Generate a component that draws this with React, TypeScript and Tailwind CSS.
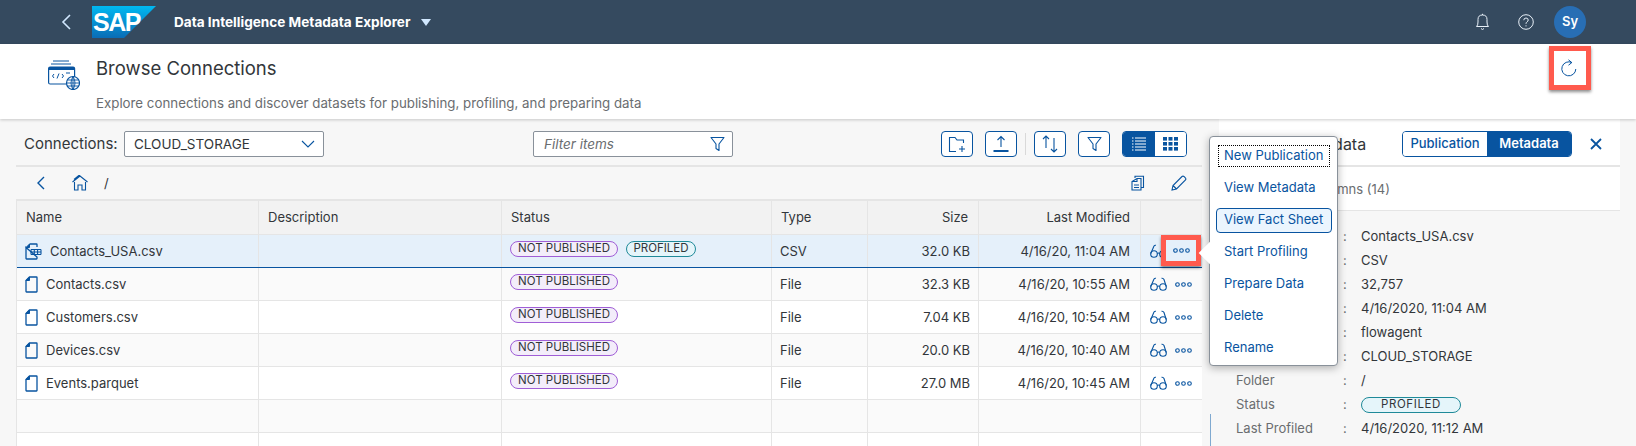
import React from "react";

const S = { stroke: "#0854a0", fill: "none", strokeWidth: 1.1 };

function FileIcon() {
  return (
    <svg width="13" height="17" viewBox="0 0 13 17" className="shrink-0">
      <path d="M4.5 1H11.5Q12 1 12 1.5V15.5Q12 16 11.5 16H1.5Q1 16 1 15.5V4.5Z" {...S} strokeWidth={1.3} />
      <path d="M1 4.5L4.5 1V4.5Z" fill="#0854a0" stroke="#0854a0" />
    </svg>
  );
}
function TableFileIcon() {
  return (
    <svg width="17" height="17" viewBox="0 0 17 17" className="shrink-0">
      <path d="M4.5 1H11.5Q12 1 12 1.5V4M12 14V15.5Q12 16 11.5 16H1.5Q1 16 1 15.5V4.5Z" {...S} strokeWidth={1.3} />
      <path d="M1 4.5L4.5 1V4.5Z" fill="#0854a0" stroke="#0854a0" />
      <path d="M6 6.5H16M6 9H16M6 11.5H16M6 6.5V11.5M9.3 6.5V11.5M12.6 6.5V11.5M16 6.5V11.5" {...S} />
    </svg>
  );
}
function Glasses() {
  return (
    <svg width="17" height="15" viewBox="0 0 17 15" className="shrink-0">
      <circle cx="4" cy="10" r="3.3" {...S} />
      <circle cx="13" cy="10" r="3.3" {...S} />
      <path d="M7.3 9.5Q8.5 8.5 9.7 9.5M0.8 9.5L4 2Q4.7 1 6 1.3M16.2 9.5L14 2.5Q13.3 1 11.5 1.3" {...S} />
    </svg>
  );
}
function Dots() {
  return (
    <svg width="17" height="5" viewBox="0 0 17 5" className="shrink-0">
      <circle cx="2.5" cy="2.5" r="1.8" {...S} />
      <circle cx="8.5" cy="2.5" r="1.8" {...S} />
      <circle cx="14.5" cy="2.5" r="1.8" {...S} />
    </svg>
  );
}
function FunnelIcon() {
  return (
    <svg width="15" height="16" viewBox="0 0 15 16">
      <path d="M1 1.5H14L9 8V14.5L6 12.5V8Z" {...S} strokeLinejoin="round" />
    </svg>
  );
}
function ToolBtn({ children }: { children: React.ReactNode }) {
  return (
    <div className="w-8 h-[26px] flex items-center justify-center rounded border border-[#0854a0] bg-white">
      {children}
    </div>
  );
}
function NotPublished() {
  return (
    <span className="h-4 w-[108px] flex items-center justify-center rounded-full border border-[#a05ed6] bg-[#f3edfa] text-[11.5px] text-[#32363a]">
      NOT PUBLISHED
    </span>
  );
}
function Profiled() {
  return (
    <span className="h-4 w-[70px] flex items-center justify-center rounded-full border border-[#1f8a99] bg-[#e5f5fa] text-[11.5px] text-[#32363a]">
      PROFILED
    </span>
  );
}

const rows = [
  { name: "Contacts.csv", size: "32.3 KB", time: "4/16/20, 10:55 AM", bg: "bg-[#fafafa]" },
  { name: "Customers.csv", size: "7.04 KB", time: "4/16/20, 10:54 AM", bg: "bg-white" },
  { name: "Devices.csv", size: "20.0 KB", time: "4/16/20, 10:40 AM", bg: "bg-[#fafafa]" },
  { name: "Events.parquet", size: "27.0 MB", time: "4/16/20, 10:45 AM", bg: "bg-white" },
];

function Row({ bg, border, name, status, type, size, time, dotsBox }: { bg: string; border?: string; name?: React.ReactNode; status?: React.ReactNode; type?: string; size?: string; time?: string; dotsBox?: boolean }) {
  return (
    <div className={`flex h-[33px] border-b text-[13px] text-[#32363a] ${bg} ${border ?? "border-[#e5e5e5]"}`}>
      <div className="w-[242px] flex items-center gap-2 pl-2 pt-px border-r border-[#e5e5e5]">{name}</div>
      <div className="w-[243px] border-r border-[#e5e5e5]" />
      <div className="w-[270px] flex gap-2 pt-[6px] pl-2 border-r border-[#e5e5e5]">{status}</div>
      <div className="w-[96px] flex items-center pl-2 pt-px border-r border-[#e5e5e5]">{type}</div>
      <div className="w-[111px] flex items-center justify-end pr-2 pt-px border-r border-[#e5e5e5]">{size}</div>
      <div className="w-[162px] flex items-center justify-end pr-[10px] pt-px border-r border-[#e5e5e5]">{time}</div>
      <div className="w-[60px] relative flex items-center gap-2 pl-[9px]">
        {type && <Glasses />}
        {type && <Dots />}
        {dotsBox && (
          <div className="absolute left-[20px] top-0 w-[40px] h-[31px] border-[5px] border-[#ff5a4d] bg-[#e5f0fa] flex items-center justify-center shadow-[0_2px_3px_rgba(0,0,0,0.45)]">
            <Dots />
          </div>
        )}
      </div>
    </div>
  );
}

function Detail({ label, children }: { label?: string; children: React.ReactNode }) {
  return (
    <div className="flex items-center h-6 text-[13px]">
      <span className="w-[124px] pl-[17px] text-[#6a6d70]">{label}</span>
      <span className="w-[18px] text-[#6a6d70]">:</span>
      <span className="text-[#32363a]">{children}</span>
    </div>
  );
}

function MenuItem({ children, focus, active }: { children: string; focus?: boolean; active?: boolean }) {
  return (
    <div className="h-8 flex items-center text-[13px] text-[#0854a0]">
      {focus ? (
        <div className="ml-[8px] w-[112px] h-[22px] pl-[5px] flex items-center border border-dotted border-black">{children}</div>
      ) : active ? (
        <div className="ml-[6px] w-[116px] h-[25px] pl-[7px] flex items-center rounded border border-[#0854a0] bg-[#ebf5fe]">{children}</div>
      ) : (
        <div className="pl-[14px]">{children}</div>
      )}
    </div>
  );
}

export default function App() {
  return (
    <div className="w-[1636px] h-[446px] overflow-hidden flex flex-col relative bg-[#f7f7f7] font-['Inter',sans-serif]">
      {/* Shell bar */}
      <header className="h-11 shrink-0 bg-[#354a5f] flex items-center">
        <svg width="12" height="18" viewBox="0 0 12 18" className="ml-[60px]">
          <path d="M10 2L3 9L10 16" fill="none" stroke="#d1e8ff" strokeWidth="1.6" />
        </svg>
        <svg width="64" height="32" viewBox="0 0 64 32" className="ml-[20px]">
          <defs>
            <linearGradient id="sapg" x1="0" y1="0" x2="0" y2="1">
              <stop offset="0" stopColor="#00b8f1" />
              <stop offset="1" stopColor="#0a6cb5" />
            </linearGradient>
          </defs>
          <polygon points="0,32 32,32 64,0 0,0" fill="url(#sapg)" />
          <text x="1" y="25" fill="#fff" fontFamily="Liberation Sans" fontWeight="700" fontSize="25" letterSpacing="-1.5">SAP</text>
        </svg>
        <span className="ml-[18px] text-[13.6px] font-bold text-white">Data Intelligence Metadata Explorer</span>
        <svg width="10" height="7" viewBox="0 0 10 7" className="ml-[10px]">
          <path d="M0 0H10L5 7Z" fill="#d1e8ff" />
        </svg>
        <div className="ml-auto flex items-center pr-[50px]">
          <svg width="15" height="18" viewBox="0 0 14 18">
            <path d="M1 13.5Q2.5 12.5 2.5 9V6.5Q2.5 2 7 2Q11.5 2 11.5 6.5V9Q11.5 12.5 13 13.5ZM5.5 15.5Q7 17.5 8.5 15.5M7 2V0.8" fill="none" stroke="#e8f0f8" strokeWidth="1" />
          </svg>
          <svg width="16" height="16" viewBox="0 0 16 16" className="ml-[28px] mr-5">
            <circle cx="8" cy="8" r="7.3" fill="none" stroke="#e8f0f8" />
            <path d="M5.8 6.2Q5.8 4 8 4Q10.2 4 10.2 6Q10.2 7.2 9 7.9Q8 8.5 8 9.8M8 11.3V12.4" fill="none" stroke="#e8f0f8" />
          </svg>
          <div className="w-8 h-8 rounded-full bg-[#286eb4] flex items-center justify-center text-[13px] font-semibold text-white">Sy</div>
        </div>
      </header>

      {/* Page title */}
      <section className="h-[75px] shrink-0 bg-white flex shadow-[0_1px_3px_rgba(0,0,0,0.2)] relative z-10">
        <svg width="32" height="30" viewBox="0 0 32 30" className="ml-[48px] mt-[16px]">
          <path d="M5 1H21M3 4H23" fill="none" stroke="#0854a0" />
          <rect x="0.6" y="7" width="26" height="17" rx="1.5" fill="none" stroke="#0854a0" strokeWidth="1.2" />
          <path d="M1 7H26V10H1Z" fill="#0854a0" />
          <path d="M6 14L4.5 16L6 18M9 18.5L11 13.5M14 14L15.5 16L14 18M18 13H22" fill="none" stroke="#0854a0" />
          <circle cx="25" cy="23" r="6.5" fill="#fff" stroke="#0854a0" strokeWidth="1.2" />
          <path d="M18.5 23H31.5M25 16.5V29.5M19.5 20H30.5M19.5 26H30.5M25 16.5Q21 23 25 29.5M25 16.5Q29 23 25 29.5" fill="none" stroke="#0854a0" strokeWidth="0.9" />
        </svg>
        <div className="ml-[16px]">
          <h1 className="mt-[10px] text-[18.5px] leading-[28px] text-[#32363a]">Browse Connections</h1>
          <p className="mt-[11px] text-[13.3px] leading-[20px] text-[#6a6d70]">Explore connections and discover datasets for publishing, profiling, and preparing data</p>
        </div>
      </section>

      {/* Main */}
      <main className="flex-1 flex">
        <div className="w-[1202px] shrink-0 pl-4">
          <div className="h-12 flex items-start pt-3 border-b-2 border-[#e5e5e5]">
            <span className="ml-2 w-[100px] text-[15px] leading-[26px] text-[#32363a]">Connections:</span>
            <div className="w-[200px] h-[26px] bg-white border border-[#89919a] rounded-[2px] flex items-center justify-between pl-[9px] pr-2 text-[13.5px] text-[#32363a]">
              CLOUD_STORAGE
              <svg width="14" height="8" viewBox="0 0 14 8"><path d="M1 1L7 7L13 1" fill="none" stroke="#0854a0" strokeWidth="1.1" /></svg>
            </div>
            <div className="ml-[209px] w-[200px] h-[26px] bg-white border border-[#89919a] rounded-[2px] flex items-center justify-between pl-[10px] pr-[7px] text-[13.5px] italic text-[#6a6d70]">
              Filter items
              <FunnelIcon />
            </div>
            <div className="ml-[208px]"><ToolBtn>
              <svg width="18" height="17" viewBox="0 0 18 17"><path d="M8 15.5H1.5V1.5H7L9 4H15.5V7M11 13H17M14 10V16" {...S} /></svg>
            </ToolBtn></div>
            <div className="ml-3"><ToolBtn>
              <svg width="16" height="18" viewBox="0 0 16 18"><path d="M8 12V1.5M4.5 5L8 1.5L11.5 5" {...S} /><rect x="0.5" y="15" width="15" height="2" fill="#0854a0" /></svg>
            </ToolBtn></div>
            <div className="ml-2 mr-2 w-px h-[22px] mt-[2px] bg-[#d9d9d9]" />
            <ToolBtn>
              <svg width="18" height="20" viewBox="0 0 18 20"><path d="M5 14V2M2 5L5 2L8 5M13 4V18M10 15L13 18L16 15" {...S} /></svg>
            </ToolBtn>
            <div className="ml-3"><ToolBtn><FunnelIcon /></ToolBtn></div>
            <div className="ml-3 flex h-[26px] w-[65px] rounded border border-[#0854a0] overflow-hidden">
              <div className="w-8 bg-[#0854a0] flex items-center justify-center">
                <svg width="14" height="14" viewBox="0 0 14 14"><path d="M3 1H14M3 4H14M3 7H14M3 10H14M3 13H14M0 1H1.5M0 4H1.5M0 7H1.5M0 10H1.5M0 13H1.5" stroke="#fff" strokeWidth="1" /></svg>
              </div>
              <div className="flex-1 bg-white flex items-center justify-center">
                <svg width="15" height="14" viewBox="0 0 15 14"><g fill="#0854a0"><rect width="4" height="3.6" /><rect x="5.5" width="4" height="3.6" /><rect x="11" width="4" height="3.6" /><rect y="5" width="4" height="3.6" /><rect x="5.5" y="5" width="4" height="3.6" /><rect x="11" y="5" width="4" height="3.6" /><rect y="10" width="4" height="3.6" /><rect x="5.5" y="10" width="4" height="3.6" /><rect x="11" y="10" width="4" height="3.6" /></g></svg>
              </div>
            </div>
          </div>

          <div className="h-8 flex items-center">
            <svg width="9" height="14" viewBox="0 0 9 14" className="ml-[20px]"><path d="M8 1L2 7L8 13" fill="none" stroke="#0854a0" strokeWidth="1.4" /></svg>
            <svg width="16" height="16" viewBox="0 0 16 16" className="ml-[27px]"><path d="M0.5 7L8 1L15.5 7M2.5 7V15H6V10H10V15H13.5V7M2 4.5L8 -0.5" {...S} /></svg>
            <span className="ml-[16px] pt-px text-[13px] text-[#32363a]">/</span>
            <svg width="14" height="16" viewBox="0 0 14 16" className="ml-auto"><path d="M4 3V1.2H12.5V12.5H10.5M6 3.5H10V15H1V6.5ZM1 6.5H6V3.5M3 10H8M3 12.5H8" {...S} /></svg>
            <svg width="16" height="16" viewBox="0 0 16 16" className="ml-[26px] mr-[15px]"><path d="M1 15L2 10.5L11 1.5Q12 .7 13.2 1.7L14.5 3Q15.2 4 14.5 5L5.5 14ZM2 10.5L5.5 14" {...S} /></svg>
          </div>

          <div className="border-t-2 border-l border-[#e5e5e5]">
            <div className="flex h-[34px] bg-[#f2f2f2] border-b border-[#e5e5e5] text-[13px] text-[#32363a]">
              <div className="w-[242px] flex items-center pl-[9px] border-r border-[#e5e5e5]">Name</div>
              <div className="w-[243px] flex items-center pl-[9px] border-r border-[#e5e5e5]">Description</div>
              <div className="w-[270px] flex items-center pl-[9px] border-r border-[#e5e5e5]">Status</div>
              <div className="w-[96px] flex items-center pl-[9px] border-r border-[#e5e5e5]">Type</div>
              <div className="w-[111px] flex items-center justify-end pr-[10px] border-r border-[#e5e5e5]">Size</div>
              <div className="w-[162px] flex items-center justify-end pr-[10px] border-r border-[#e5e5e5]">Last Modified</div>
              <div className="w-[60px]" />
            </div>
            <Row
              bg="bg-[#e5f0fa]"
              border="border-[#0854a0]"
              name={<><TableFileIcon /><span>Contacts_USA.csv</span></>}
              status={<><NotPublished /><Profiled /></>}
              type="CSV"
              size="32.0 KB"
              time="4/16/20, 11:04 AM"
              dotsBox
            />
            {rows.map((r) => (
              <Row
                key={r.name}
                bg={r.bg}
                name={<><FileIcon /><span>{r.name}</span></>}
                status={<NotPublished />}
                type="File"
                size={r.size}
                time={r.time}
              />
            ))}
            <Row bg="bg-[#fafafa]" />
            <Row bg="bg-white" />
          </div>
        </div>

        {/* Details */}
        <div className="ml-[17px] w-[401px] shrink-0">
          <div className="bg-white">
            <div className="h-12 flex items-start pt-3 border-b-2 border-[#e5e5e5]">
              <span className="ml-[76px] text-[16px] leading-[26px] text-[#32363a]">Metadata</span>
              <div className="ml-auto flex h-[26px] w-[170px] rounded border border-[#0854a0] overflow-hidden text-[13px] font-medium">
                <div className="flex-1 bg-white text-[#0854a0] flex items-center justify-center">Publication</div>
                <div className="flex-1 bg-[#0854a0] text-white flex items-center justify-center font-semibold">Metadata</div>
              </div>
              <svg width="12" height="12" viewBox="0 0 12 12" className="ml-[18px] mr-[18px] mt-[7px]"><path d="M1 1L11 11M11 1L1 11" stroke="#0854a0" strokeWidth="1.8" /></svg>
            </div>
            <div className="h-[44px] flex items-center pl-[90px] pt-[2px] text-[13px] text-[#6a6d70] border-b border-[#e5e5e5]">Columns (14)</div>
          </div>
          <div className="pt-[14px]">
            <Detail>Contacts_USA.csv</Detail>
            <Detail>CSV</Detail>
            <Detail>32,757</Detail>
            <Detail>4/16/2020, 11:04 AM</Detail>
            <Detail>flowagent</Detail>
            <Detail>CLOUD_STORAGE</Detail>
            <Detail label="Folder">/</Detail>
            <Detail label="Status">
              <span className="h-4 w-[100px] flex items-center justify-center rounded-full border border-[#1f8a99] bg-[#e5f5fa] text-[11.5px] tracking-[0.6px]">PROFILED</span>
            </Detail>
            <Detail label="Last Profiled">4/16/2020, 11:12 AM</Detail>
          </div>
        </div>
      </main>

      {/* Splitter edge */}
      <div className="absolute left-[1210px] top-[414px] bottom-0 w-px bg-[#7fa9d0]" />

      {/* Refresh highlight */}
      <div className="absolute left-[1549px] top-[46px] w-[42px] h-[44px] z-20 border-[5px] border-[#ff5a4d] bg-white flex items-center justify-center pr-[3px] shadow-[0_2px_3px_rgba(0,0,0,0.45)]">
        <svg width="17" height="18" viewBox="0 0 17 18"><path d="M12 3.6A7 7 0 1 0 15.8 10M8.5 .8L11.8 3.6L8.5 6.2" fill="none" stroke="#0854a0" strokeWidth="1" /></svg>
      </div>

      {/* Action menu */}
      <div className="absolute left-[1209px] top-[136px] w-[129px] h-[230px] z-30 bg-white rounded border border-[#89919a] shadow-[0_2px_8px_rgba(0,0,0,0.3)] pt-[3px]">
        <div className="absolute -left-[8px] top-[108px] w-4 h-4 rotate-45 bg-white" />
        <div className="relative">
          <MenuItem focus>New Publication</MenuItem>
          <MenuItem>View Metadata</MenuItem>
          <MenuItem active>View Fact Sheet</MenuItem>
          <MenuItem>Start Profiling</MenuItem>
          <MenuItem>Prepare Data</MenuItem>
          <MenuItem>Delete</MenuItem>
          <MenuItem>Rename</MenuItem>
        </div>
      </div>
    </div>
  );
}
